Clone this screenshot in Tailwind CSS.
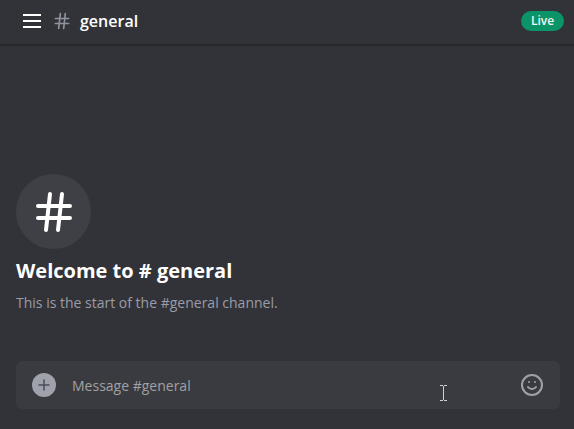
<!DOCTYPE html>
<html lang="en">
<head>
<meta charset="utf-8">
<title>general</title>
<script src="https://cdn.jsdelivr.net/npm/@tailwindcss/browser@4"></script>
</head>
<body class="relative flex h-[429px] w-[574px] flex-col overflow-hidden bg-[#313338] font-['Open_Sans','Noto_Sans',sans-serif]">
  <header class="flex h-[46px] shrink-0 items-center border-b-2 border-[#27282b] pb-0.5 pl-5 pr-2.5">
    <svg class="size-6" viewBox="0 0 24 24" fill="none" stroke="#fff" stroke-width="2"><path d="M3 6h18M3 12h18M3 18h18"/></svg>
    <svg class="ml-2 size-5" viewBox="0 0 24 24" fill="none" stroke="#8e939e" stroke-width="2" stroke-linecap="round"><path d="M4 9h16M4 15h16M10 3L8 21M16 3l-2 18"/></svg>
    <h1 class="ml-2 text-base font-semibold leading-6 text-white">general</h1>
    <span class="ml-auto flex h-5 w-[43px] items-center justify-center rounded-full bg-[#0b9468] text-xs font-semibold text-[#f4f6f5]">Live</span>
  </header>
  <main class="flex flex-1 flex-col justify-end px-4">
    <div class="flex size-[75px] items-center justify-center rounded-full bg-[#3f4045]">
      <svg class="size-12" viewBox="0 0 24 24" fill="none" stroke="#fff" stroke-width="2" stroke-linecap="round"><path d="M4 9h16M4 15h16M10 3L8 21M16 3l-2 18"/></svg>
    </div>
    <h2 class="mt-2 text-xl font-bold leading-7 text-white">Welcome to # general</h2>
    <p class="mt-2 text-sm leading-5 text-[#9c9ca8]">This is the start of the #general channel.</p>
  </main>
  <div class="pb-5 pl-4 pr-3.5 pt-12">
    <div class="flex h-12 items-center rounded-md bg-[#3a3b40] px-4">
      <svg class="size-6" viewBox="0 0 24 24"><circle cx="12" cy="12" r="12" fill="#9fa1ab"/><path d="M12 6.5v11M6.5 12h11" stroke="#4b4f5b" stroke-width="1.5"/></svg>
      <span class="ml-4 pt-0.5 text-sm text-[#a1a1a3]">Message #general</span>
      <svg class="ml-auto size-6" viewBox="0 0 24 24" fill="none" stroke="#a1a1aa" stroke-width="2" stroke-linecap="round"><circle cx="12" cy="12" r="10"/><path d="M8 14s1.5 2 4 2 4-2 4-2M9 9h.01M15 9h.01"/></svg>
    </div>
  </div>
  <svg class="absolute left-[440px] top-[385px]" width="7" height="16" viewBox="0 0 7 16" fill="none" stroke="#d0d0d0"><path d="M0 .5h3M4 .5h3M3.5 1v14M0 15.5h3M4 15.5h3"/></svg>
</body>
</html>
